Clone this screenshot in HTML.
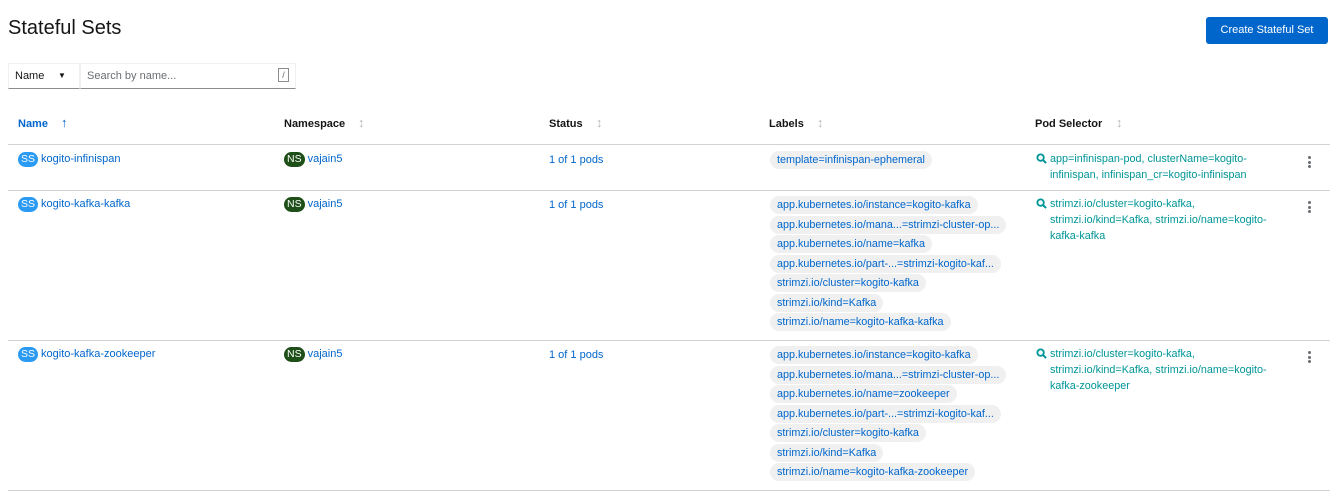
<!DOCTYPE html>
<html><head><meta charset="utf-8"><style>
body{margin:0;width:1338px;height:497px;background:#fff;font-family:"Liberation Sans",sans-serif;position:relative;overflow:hidden;font-size:11px;color:#151515}
.a{position:absolute;white-space:nowrap}
h1{position:absolute;left:8px;top:17px;margin:0;font-size:20px;font-weight:normal;color:#151515}
.btn{position:absolute;left:1206px;top:17px;width:122px;height:27px;background:#0066cc;color:#fff;border-radius:3px;font-size:11px;text-align:center;line-height:27px}
.line{position:absolute;left:8px;width:1322px;height:1px;background:#d2d2d2}
.th{font-weight:bold;font-size:11px;color:#151515}
.lnk{color:#0066cc}
.ss{display:inline-block;background:#2b9af3;color:#fff;border-radius:9px;padding:0 3px;font-size:10.5px;line-height:15px;margin-right:3px}
.ns{display:inline-block;background:#1e4f18;color:#fff;border-radius:9px;padding:0 3px;font-size:10.5px;line-height:15px;margin-right:3px}
.pill{position:absolute;left:770px;height:18px;line-height:18px;background:#f0f0f0;border-radius:9px;padding:0 7px;color:#0066cc;font-size:10.8px;white-space:nowrap}
.pod{position:absolute;left:1050px;width:218px;color:#009596;font-size:10.8px;line-height:16px}
.mag{position:absolute;left:1036px;width:11px;height:11px}
.keb{position:absolute;left:1308px;width:3px}
.keb i{display:block;width:3px;height:3px;background:#6a6e73;border-radius:50%;margin-bottom:1.5px}
.sort{color:#b8bbbe;font-size:13px}
</style></head><body>
<h1>Stateful Sets</h1>
<div class="btn">Create Stateful Set</div>
<div class="a" style="left:8px;top:63px;width:72px;height:26px;border:1px solid #f0f0f0;border-bottom:1px solid #8a8d90;box-sizing:border-box"></div>
<div class="a" style="left:15px;top:70px;font-size:11px">Name</div>
<div class="a" style="left:58px;top:71px;font-size:8px">&#9660;</div>
<div class="a" style="left:80px;top:63px;width:216px;height:26px;border:1px solid #f0f0f0;border-bottom:1px solid #8a8d90;box-sizing:border-box"></div>
<div class="a" style="left:87px;top:70px;color:#6a6e73">Search by name...</div>
<div class="a" style="left:278px;top:68px;width:11px;height:14px;border:1px solid #8a8d90;box-sizing:border-box;font-size:9px;text-align:center;line-height:12px;color:#6a6e73">/</div>

<div class="a th lnk" style="left:18px;top:118px;color:#0066cc">Name</div>
<div class="a" style="left:61px;top:115px;color:#0066cc;font-weight:bold;font-size:13px">&#8593;</div>
<div class="a th" style="left:284px;top:118px">Namespace</div><div class="a sort" style="left:358px;top:115px">&#8597;</div>
<div class="a th" style="left:549px;top:118px">Status</div><div class="a sort" style="left:596px;top:115px">&#8597;</div>
<div class="a th" style="left:769px;top:118px">Labels</div><div class="a sort" style="left:817px;top:115px">&#8597;</div>
<div class="a th" style="left:1035px;top:118px">Pod Selector</div><div class="a sort" style="left:1116px;top:115px">&#8597;</div>

<div class="line" style="top:144px"></div>
<div class="line" style="top:190px"></div>
<div class="line" style="top:340px"></div>
<div class="line" style="top:490px"></div>

<!-- row1 -->
<div class="a lnk" style="left:18px;top:152px"><span class="ss">SS</span>kogito-infinispan</div>
<div class="a lnk" style="left:284px;top:152px"><span class="ns">NS</span>vajain5</div>
<div class="a lnk" style="left:549px;top:154px">1 of 1 pods</div>
<div class="pill" style="top:151px">template=infinispan-ephemeral</div>
<svg class="mag" style="top:153px" viewBox="0 0 12 12"><circle cx="5" cy="5" r="3.5" fill="none" stroke="#009596" stroke-width="2"/><path d="M7.5 7.5L11 11" stroke="#009596" stroke-width="2.2"/></svg>
<div class="pod" style="top:151px">app=infinispan-pod, clusterName=kogito-infinispan, infinispan_cr=kogito-infinispan</div>
<div class="keb" style="top:156px"><i></i><i></i><i></i></div>

<!-- row2 -->
<div class="a lnk" style="left:18px;top:197px"><span class="ss">SS</span>kogito-kafka-kafka</div>
<div class="a lnk" style="left:284px;top:197px"><span class="ns">NS</span>vajain5</div>
<div class="a lnk" style="left:549px;top:199px">1 of 1 pods</div>
<div class="pill" style="top:196px">app.kubernetes.io/instance=kogito-kafka</div>
<div class="pill" style="top:215.5px">app.kubernetes.io/mana...=strimzi-cluster-op...</div>
<div class="pill" style="top:235px">app.kubernetes.io/name=kafka</div>
<div class="pill" style="top:255px">app.kubernetes.io/part-...=strimzi-kogito-kaf...</div>
<div class="pill" style="top:274px">strimzi.io/cluster=kogito-kafka</div>
<div class="pill" style="top:294px">strimzi.io/kind=Kafka</div>
<div class="pill" style="top:313px">strimzi.io/name=kogito-kafka-kafka</div>
<svg class="mag" style="top:198px" viewBox="0 0 12 12"><circle cx="5" cy="5" r="3.5" fill="none" stroke="#009596" stroke-width="2"/><path d="M7.5 7.5L11 11" stroke="#009596" stroke-width="2.2"/></svg>
<div class="pod" style="top:196px">strimzi.io/cluster=kogito-kafka, strimzi.io/kind=Kafka, strimzi.io/name=kogito-kafka-kafka</div>
<div class="keb" style="top:201px"><i></i><i></i><i></i></div>

<!-- row3 -->
<div class="a lnk" style="left:18px;top:347px"><span class="ss">SS</span>kogito-kafka-zookeeper</div>
<div class="a lnk" style="left:284px;top:347px"><span class="ns">NS</span>vajain5</div>
<div class="a lnk" style="left:549px;top:349px">1 of 1 pods</div>
<div class="pill" style="top:346px">app.kubernetes.io/instance=kogito-kafka</div>
<div class="pill" style="top:365.5px">app.kubernetes.io/mana...=strimzi-cluster-op...</div>
<div class="pill" style="top:385px">app.kubernetes.io/name=zookeeper</div>
<div class="pill" style="top:405px">app.kubernetes.io/part-...=strimzi-kogito-kaf...</div>
<div class="pill" style="top:424px">strimzi.io/cluster=kogito-kafka</div>
<div class="pill" style="top:444px">strimzi.io/kind=Kafka</div>
<div class="pill" style="top:463px">strimzi.io/name=kogito-kafka-zookeeper</div>
<svg class="mag" style="top:348px" viewBox="0 0 12 12"><circle cx="5" cy="5" r="3.5" fill="none" stroke="#009596" stroke-width="2"/><path d="M7.5 7.5L11 11" stroke="#009596" stroke-width="2.2"/></svg>
<div class="pod" style="top:346px">strimzi.io/cluster=kogito-kafka, strimzi.io/kind=Kafka, strimzi.io/name=kogito-kafka-zookeeper</div>
<div class="keb" style="top:351px"><i></i><i></i><i></i></div>
</body></html>
